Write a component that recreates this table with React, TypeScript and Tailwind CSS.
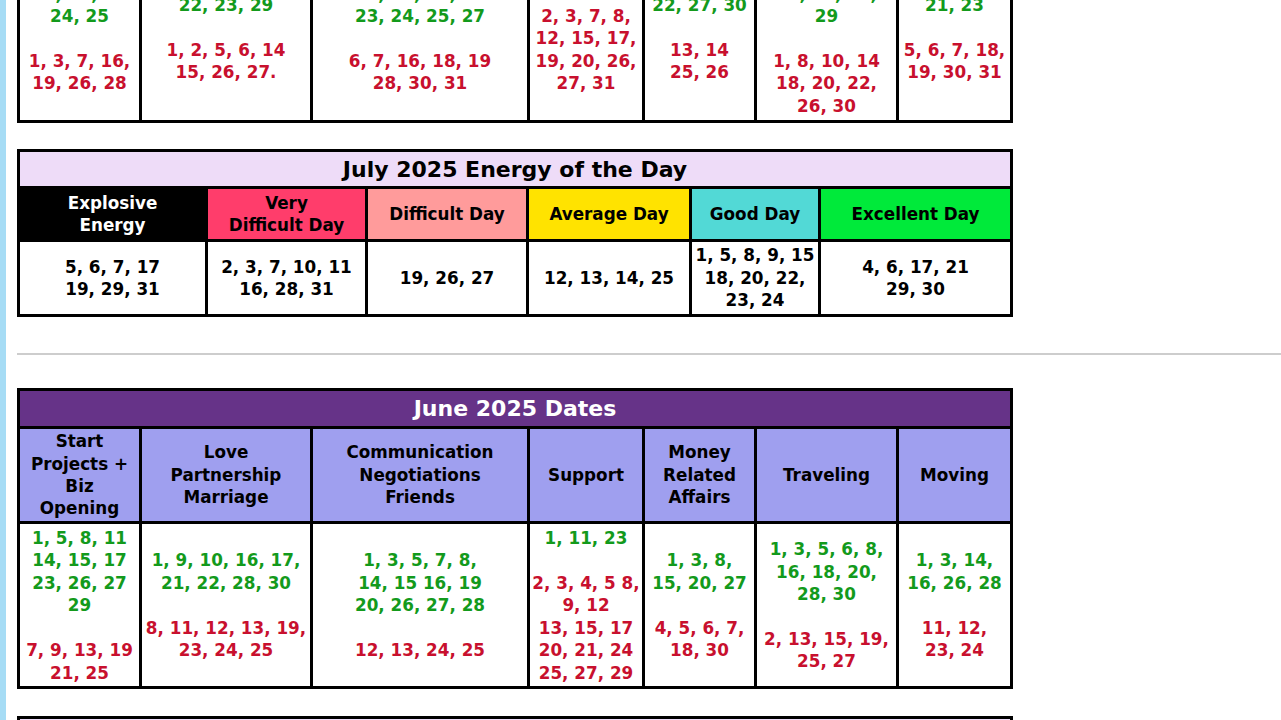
import React from "react"

type DateCell = { green: string[]; red: string[] }

const GREEN = "text-[#139a1c]"
const RED = "text-[#c8102e]"

const dateCols = ["w-[122px]", "w-[171px]", "w-[217px]", "w-[115px]", "w-[112px]", "w-[142px]", "w-[114px]"]
const energyCols = ["w-[188px]", "w-[160px]", "w-[161px]", "w-[163px]", "w-[129px]", "w-[192px]"]

const dateHeaders: React.ReactNode[] = [
  <>Start<br />Projects +<br />Biz<br />Opening</>,
  <>Love<br />Partnership<br />Marriage</>,
  <>Communication<br />Negotiations<br />Friends</>,
  <>Support</>,
  <>Money<br />Related<br />Affairs</>,
  <>Traveling</>,
  <>Moving</>,
]

const julyDates: DateCell[] = [
  { green: ["2, 4, 6, 9,", "12, 13, 21", "24, 25"], red: ["1, 3, 7, 16,", "19, 26, 28"] },
  { green: ["4, 9, 10, 17,", "22, 23, 29"], red: ["1, 2, 5, 6, 14", "15, 26, 27."] },
  { green: ["3, 4, 8, 11,", "13, 18, 21, 22", "23, 24, 25, 27"], red: ["6, 7, 16, 18, 19", "28, 30, 31"] },
  { green: ["4, 9, 10"], red: ["2, 3, 7, 8,", "12, 15, 17,", "19, 20, 26,", "27, 31"] },
  { green: ["4, 9, 17,", "22, 27, 30"], red: ["13, 14", "25, 26"] },
  { green: ["2, 4, 5, 9,", "11, 12, 17,", "23, 25, 27,", "29"], red: ["1, 8, 10, 14", "18, 20, 22,", "26, 30"] },
  { green: ["9, 10, 15,", "21, 23"], red: ["5, 6, 7, 18,", "19, 30, 31"] },
]

const juneDates: DateCell[] = [
  { green: ["1, 5, 8, 11", "14, 15, 17", "23, 26, 27", "29"], red: ["7, 9, 13, 19", "21, 25"] },
  { green: ["1, 9, 10, 16, 17,", "21, 22, 28, 30"], red: ["8, 11, 12, 13, 19,", "23, 24, 25"] },
  { green: ["1, 3, 5, 7, 8,", "14, 15 16, 19", "20, 26, 27, 28"], red: ["12, 13, 24, 25"] },
  { green: ["1, 11, 23"], red: ["2, 3, 4, 5 8,", "9, 12", "13, 15, 17", "20, 21, 24", "25, 27, 29"] },
  { green: ["1, 3, 8,", "15, 20, 27"], red: ["4, 5, 6, 7,", "18, 30"] },
  { green: ["1, 3, 5, 6, 8,", "16, 18, 20,", "28, 30"], red: ["2, 13, 15, 19,", "25, 27"] },
  { green: ["1, 3, 14,", "16, 26, 28"], red: ["11, 12,", "23, 24"] },
]

const energyHeads = [
  { label: <>Explosive<br />Energy</>, bg: "bg-black text-white" },
  { label: <>Very<br />Difficult Day</>, bg: "bg-[#ff3d6b]" },
  { label: <>Difficult Day</>, bg: "bg-[#ff9b9b]" },
  { label: <>Average Day</>, bg: "bg-[#ffe300]" },
  { label: <>Good Day</>, bg: "bg-[#52d9d6]" },
  { label: <>Excellent Day</>, bg: "bg-[#00ea3a]" },
]

const julyEnergy: React.ReactNode[] = [
  <>5, 6, 7, 17<br />19, 29, 31</>,
  <>2, 3, 7, 10, 11<br />16, 28, 31</>,
  <>19, 26, 27</>,
  <>12, 13, 14, 25</>,
  <>1, 5, 8, 9, 15<br />18, 20, 22,<br />23, 24</>,
  <>4, 6, 17, 21<br />29, 30</>,
]

const td = "border-[3px] border-black text-center align-middle p-0"

const DatesTable = ({ title, data, rowH }: { title: string; data: DateCell[]; rowH: string }) => (
  <table className="border-collapse table-fixed w-[994px]">
    <colgroup>
      {dateCols.map((w, i) => (
        <col key={i} className={w} />
      ))}
    </colgroup>
    <tbody>
      <tr>
        <td colSpan={7} className={`${td} h-[38px] bg-[#663388] text-white text-[22px] leading-[26px]`}>
          {title}
        </td>
      </tr>
      <tr>
        {dateHeaders.map((h, i) => (
          <td key={i} className={`${td} h-[95px] bg-[#9f9fef]`}>
            {h}
          </td>
        ))}
      </tr>
      <tr>
        {data.map((c, i) => (
          <td key={i} className={`${td} ${rowH} bg-white`}>
            <div className={GREEN}>
              {c.green.map((l, j) => (
                <div key={j}>{l}</div>
              ))}
            </div>
            <div className="h-[22.4px]" />
            <div className={RED}>
              {c.red.map((l, j) => (
                <div key={j}>{l}</div>
              ))}
            </div>
          </td>
        ))}
      </tr>
    </tbody>
  </table>
)

const EnergyTable = ({ title, data }: { title: string; data: React.ReactNode[] }) => (
  <table className="border-collapse table-fixed w-[994px]">
    <colgroup>
      {energyCols.map((w, i) => (
        <col key={i} className={w} />
      ))}
    </colgroup>
    <tbody>
      <tr>
        <td colSpan={6} className={`${td} h-[37px] bg-[#eedcf8] text-black text-[22px] leading-[26px] pt-[2px]`}>
          {title}
        </td>
      </tr>
      <tr>
        {energyHeads.map((h, i) => (
          <td key={i} className={`${td} h-[53px] ${h.bg}`}>
            {h.label}
          </td>
        ))}
      </tr>
      <tr>
        {data.map((d, i) => (
          <td key={i} className={`${td} h-[75px] bg-white text-black`}>
            {d}
          </td>
        ))}
      </tr>
    </tbody>
  </table>
)

export default function App() {
  return (
    <div
      className="h-[720px] overflow-hidden bg-white flex text-[16.8px] leading-[22.4px] font-bold"
      style={{ fontFamily: '"DejaVu Sans", Verdana, sans-serif' }}
    >
      <div className="w-[6px] shrink-0 bg-[#a6dcf5]" />
      <div className="flex-1 pl-[11px] flex flex-col">
        {/* scrolled page: only the bottom of the first table shows */}
        <div className="h-[123px] overflow-hidden flex flex-col justify-end shrink-0">
          <DatesTable title="July 2025 Dates" data={julyDates} rowH="h-[188px]" />
        </div>
        <div className="mt-[26px] shrink-0">
          <EnergyTable title="July 2025 Energy of the Day" data={julyEnergy} />
        </div>
        <div className="mt-[36px] h-[2px] shrink-0 bg-[#cdcdcd]" />
        <div className="mt-[33px] shrink-0">
          <DatesTable title="June 2025 Dates" data={juneDates} rowH="h-[165px] pt-[1px]" />
        </div>
        <div className="mt-[27px] shrink-0">
          <EnergyTable title="June 2025 Energy of the Day" data={julyEnergy} />
        </div>
      </div>
    </div>
  )
}
